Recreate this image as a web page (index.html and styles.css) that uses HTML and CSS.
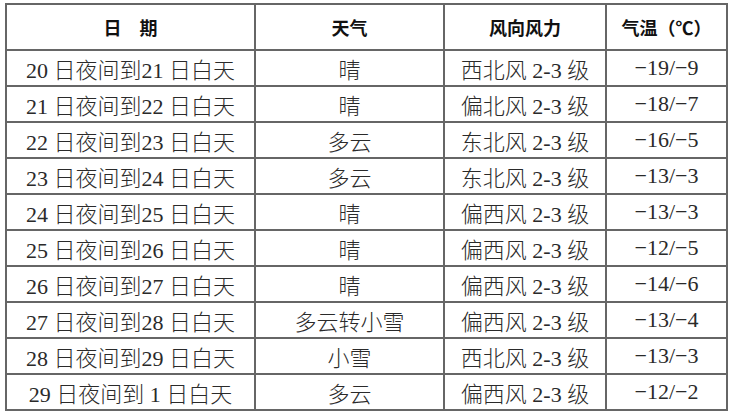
FILE: index.html
```html
<!DOCTYPE html>
<html lang="zh">
<head>
<meta charset="utf-8">
<link rel="stylesheet" href="styles.css">
</head>
<body>
<table class="wx">
  <colgroup>
    <col class="c1"><col class="c2"><col class="c3"><col class="c4">
  </colgroup>
  <thead>
    <tr><th>日　期</th><th>天气</th><th>风向风力</th><th>气温（℃）</th></tr>
  </thead>
  <tbody>
    <tr><td>20 日夜间到21 日白天</td><td>晴</td><td>西北风 2-3 级</td><td>−19/−9</td></tr>
    <tr><td>21 日夜间到22 日白天</td><td>晴</td><td>偏北风 2-3 级</td><td>−18/−7</td></tr>
    <tr><td>22 日夜间到23 日白天</td><td>多云</td><td>东北风 2-3 级</td><td>−16/−5</td></tr>
    <tr><td>23 日夜间到24 日白天</td><td>多云</td><td>东北风 2-3 级</td><td>−13/−3</td></tr>
    <tr><td>24 日夜间到25 日白天</td><td>晴</td><td>偏西风 2-3 级</td><td>−13/−3</td></tr>
    <tr><td>25 日夜间到26 日白天</td><td>晴</td><td>偏西风 2-3 级</td><td>−12/−5</td></tr>
    <tr><td>26 日夜间到27 日白天</td><td>晴</td><td>偏西风 2-3 级</td><td>−14/−6</td></tr>
    <tr><td>27 日夜间到28 日白天</td><td>多云转小雪</td><td>偏西风 2-3 级</td><td>−13/−4</td></tr>
    <tr><td>28 日夜间到29 日白天</td><td>小雪</td><td>西北风 2-3 级</td><td>−13/−3</td></tr>
    <tr><td>29 日夜间到 1 日白天</td><td>多云</td><td>偏西风 2-3 级</td><td>−12/−2</td></tr>
  </tbody>
</table>
</body>
</html>
```

FILE: styles.css
```css
html, body {
  margin: 0;
  padding: 0;
  background: #ffffff;
}
body {
  padding: 3px 0 0 5px;
}
.wx {
  border-collapse: collapse;
  table-layout: fixed;
  width: 721px;
  border: 2px solid #5c5c5c;
  font-family: "Liberation Serif", "Noto Sans CJK SC", serif;
  color: #2a2a2a;
}
.c1 { width: 249px; }
.c2 { width: 189px; }
.c3 { width: 162px; }
.c4 { width: 121px; }
.wx th, .wx td {
  border: 2px solid #666666;
  text-align: center;
  padding: 0;
  white-space: nowrap;
}
.wx th {
  height: 44px;
  font-family: "Noto Sans CJK SC", sans-serif;
  font-weight: 700;
  font-size: 18px;
  color: #111111;
}
.wx td {
  height: 34px;
  font-size: 22px;
  font-weight: 300;
}
```
